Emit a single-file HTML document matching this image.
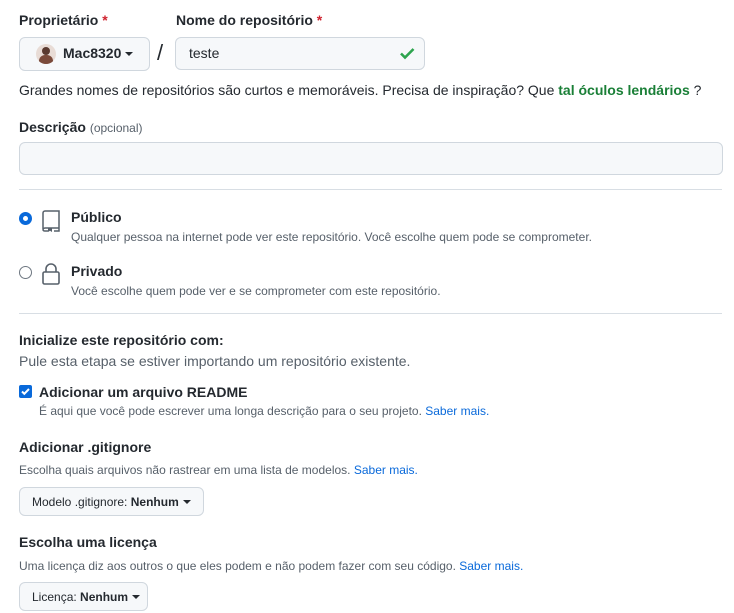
<!DOCTYPE html>
<html><head><meta charset="utf-8"><style>
*{box-sizing:border-box;margin:0;padding:0}
body{width:734px;height:613px;background:#fff;font-family:"Liberation Sans",sans-serif;color:#24292f;position:relative;overflow:hidden}
.a{position:absolute;white-space:nowrap}
.lbl{font-size:14px;font-weight:bold}
.s{font-size:12px;color:#57606a}
.req{color:#cf222e}
.link{color:#0969da}
.box{position:absolute;border:1px solid #d0d7de;border-radius:6px;background:#f6f8fa}
.btn{position:absolute;border:1px solid #d0d7de;border-radius:6px;background:#f6f8fa;font-size:12px;display:flex;align-items:center;padding-left:12px;color:#24292f}
.caret{display:inline-block;width:0;height:0;border-left:4px solid transparent;border-right:4px solid transparent;border-top:4px solid #24292f;margin-left:4px;vertical-align:middle}
hr{position:absolute;left:19px;width:703px;border:0;border-top:1px solid #d8dee4}
</style></head><body>
<div class="a lbl" style="left:19px;top:12px">Proprietário <span class="req">*</span></div>
<div class="a lbl" style="left:176px;top:12px">Nome do repositório <span class="req">*</span></div>
<div class="box" style="left:19px;top:37px;width:131px;height:34px"></div>
<div class="a" style="left:36px;top:44px;width:20px;height:20px;border-radius:50%;background:#e8dcd6;overflow:hidden"><div style="position:absolute;left:6px;top:3px;width:8px;height:8px;border-radius:50%;background:#5a3a30"></div><div style="position:absolute;left:3px;top:11px;width:14px;height:9px;border-radius:6px 6px 0 0;background:#7a4a3a"></div></div>
<div class="a" style="left:63px;top:45px;font-size:14px;font-weight:bold">Mac8320<span class="caret"></span></div>
<div class="a" style="left:157px;top:40px;font-size:22px">/</div>
<div class="box" style="left:175px;top:37px;width:250px;height:33px"></div>
<div class="a" style="left:189px;top:45px;font-size:14px">teste</div>
<svg class="a" style="left:398px;top:44px" width="18" height="18" viewBox="0 0 18 18"><path d="M3 9.5l4 4 8.5-8.5" stroke="#2da44e" stroke-width="2.6" fill="none"/></svg>
<div class="a" style="left:19px;top:82px;font-size:14px">Grandes nomes de repositórios são curtos e memoráveis. Precisa de inspiração? Que <b style="color:#1a7f37">tal óculos lendários</b> ?</div>
<div class="a lbl" style="left:19px;top:119px">Descrição <span style="font-size:12px;color:#57606a;font-weight:normal">(opcional)</span></div>
<div class="box" style="left:19px;top:142px;width:704px;height:33px"></div>
<hr style="top:189px">
<div class="a" style="left:19px;top:212px;width:13px;height:13px;border-radius:50%;border:4px solid #0969da;background:#fff"></div>
<svg class="a" style="left:40px;top:209px" width="22" height="24" viewBox="0 0 22 24"><path d="M3 20V4a2 2 0 0 1 2-2h14v17H5a2 2 0 0 0-2 2 2 2 0 0 0 2 1h3M14 22h5v-3" stroke="#57606a" stroke-width="1.5" fill="none"/><path d="M8 19v4l2-1.3 2 1.3v-4z" fill="#57606a"/></svg>
<div class="a lbl" style="left:71px;top:209px">Público</div>
<div class="a s" style="left:71px;top:230px">Qualquer pessoa na internet pode ver este repositório. Você escolhe quem pode se comprometer.</div>
<div class="a" style="left:19px;top:266px;width:13px;height:13px;border-radius:50%;border:1px solid #6e7781;background:#fff"></div>
<svg class="a" style="left:40px;top:262px" width="22" height="24" viewBox="0 0 22 24"><path d="M6 10V7a5 5 0 0 1 10 0v3" stroke="#57606a" stroke-width="1.6" fill="none"/><rect x="3" y="10" width="16" height="12" rx="1.5" stroke="#57606a" stroke-width="1.6" fill="none"/></svg>
<div class="a lbl" style="left:71px;top:263px">Privado</div>
<div class="a s" style="left:71px;top:284px">Você escolhe quem pode ver e se comprometer com este repositório.</div>
<hr style="top:313px">
<div class="a lbl" style="left:19px;top:332px">Inicialize este repositório com:</div>
<div class="a" style="left:19px;top:353px;font-size:14px;color:#57606a">Pule esta etapa se estiver importando um repositório existente.</div>
<div class="a" style="left:19px;top:385px;width:13px;height:13px;border-radius:2px;background:#0969da"><svg width="13" height="13" viewBox="0 0 13 13" style="position:absolute;left:0;top:0"><path d="M3 6.5l2.3 2.3L10 4" stroke="#fff" stroke-width="2" fill="none"/></svg></div>
<div class="a lbl" style="left:39px;top:384px">Adicionar um arquivo README</div>
<div class="a s" style="left:39px;top:404px">É aqui que você pode escrever uma longa descrição para o seu projeto. <span class="link">Saber mais.</span></div>
<div class="a lbl" style="left:19px;top:439px">Adicionar .gitignore</div>
<div class="a s" style="left:19px;top:463px">Escolha quais arquivos não rastrear em uma lista de modelos. <span class="link">Saber mais.</span></div>
<div class="btn" style="left:19px;top:487px;width:185px;height:29px">Modelo .gitignore:&nbsp;<b>Nenhum</b><span class="caret"></span></div>
<div class="a lbl" style="left:19px;top:534px">Escolha uma licença</div>
<div class="a s" style="left:19px;top:559px">Uma licença diz aos outros o que eles podem e não podem fazer com seu código. <span class="link">Saber mais.</span></div>
<div class="btn" style="left:19px;top:582px;width:129px;height:29px">Licença:&nbsp;<b>Nenhum</b><span class="caret"></span></div>
</body></html>
